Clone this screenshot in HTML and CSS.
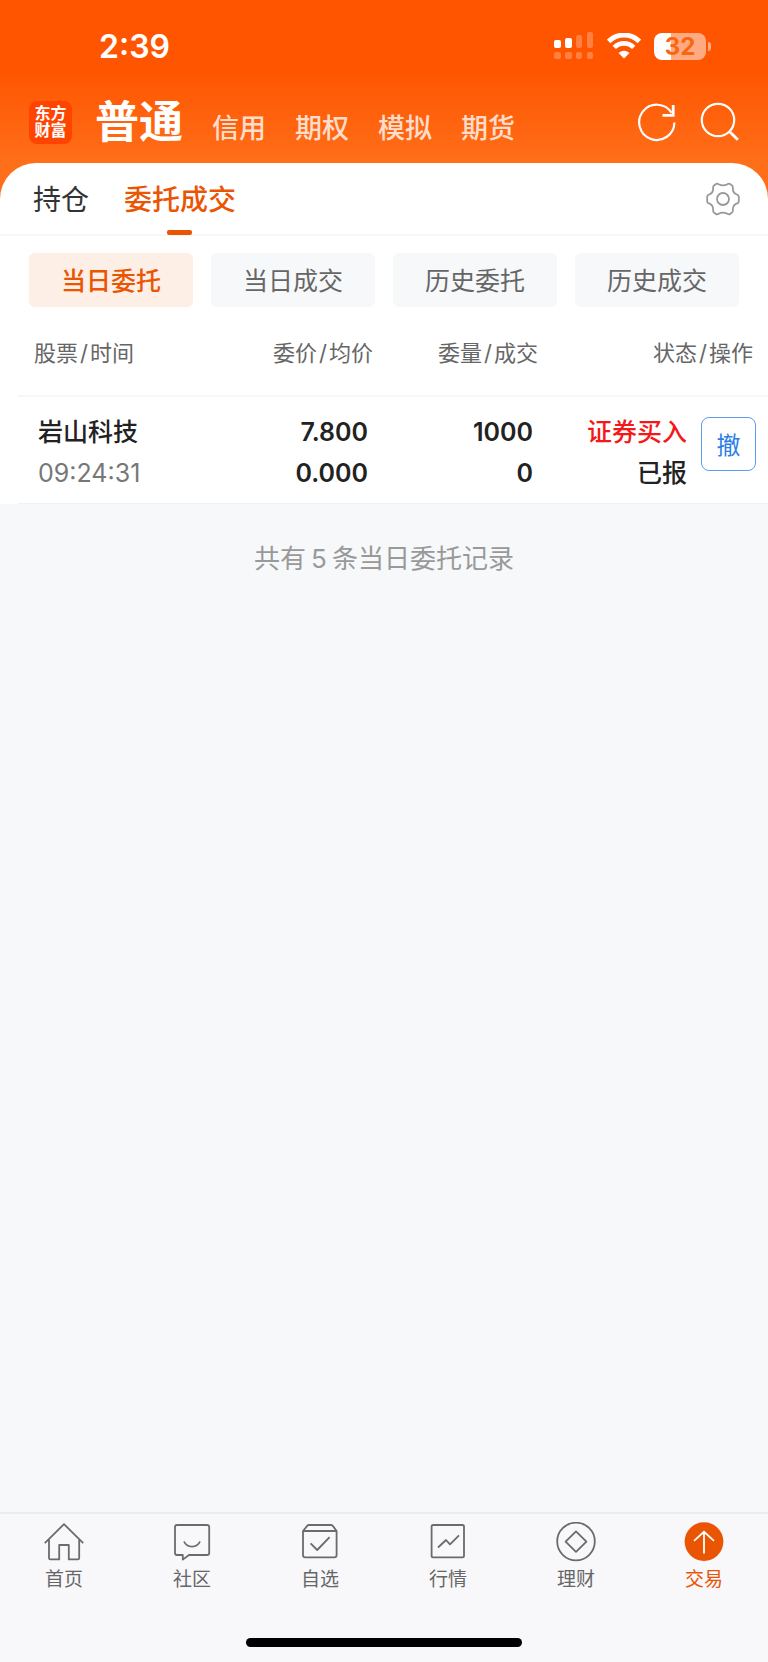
FILE: index.html
```html
<!DOCTYPE html>
<html lang="zh-CN">
<head>
  <meta charset="UTF-8" />
  <meta name="viewport" content="width=device-width, initial-scale=1.0" />
  <title>委托成交</title>
  <link rel="stylesheet" href="styles.css">
</head>
<body>

  <header class="top">
    <div class="status-bar">
      <span class="clock">2:39</span>
      <div class="status-icons">
        <svg class="signal" width="40" height="28" viewBox="0 0 40 28" fill="#fff">
          <rect x="0" y="8" width="7" height="8" rx="2"/>
          <rect x="11" y="6" width="7" height="10" rx="2"/>
          <g opacity="0.25">
            <rect x="22" y="3" width="6" height="13" rx="2"/>
            <rect x="33" y="0" width="6" height="16" rx="2"/>
            <rect x="0" y="20" width="7" height="7" rx="2"/>
            <rect x="11" y="20" width="7" height="7" rx="2"/>
            <rect x="22" y="20" width="6" height="7" rx="2"/>
            <rect x="33" y="20" width="6" height="7" rx="2"/>
          </g>
        </svg>
        <svg class="wifi" width="34" height="26" viewBox="0 0 34 26">
          <path d="M1.6 8.4 A21.8 21.8 0 0 1 32.4 8.4" fill="none" stroke="#fff" stroke-width="5"/>
          <path d="M7.2 14.4 A13.8 13.8 0 0 1 26.8 14.4" fill="none" stroke="#fff" stroke-width="4.8"/>
          <path d="M17 25.5 L11.5 20 Q17 15.4 22.5 20 Z" fill="#fff"/>
        </svg>
        <div class="battery"><span class="battery-level">32</span></div>
      </div>
    </div>

    <div class="account-bar">
      <div class="logo"><span>东方</span><span>财富</span></div>
      <nav class="accounts">
        <a href="#" class="account active">普通</a>
        <a href="#" class="account">信用</a>
        <a href="#" class="account">期权</a>
        <a href="#" class="account">模拟</a>
        <a href="#" class="account">期货</a>
      </nav>
      <div class="tools">
        <button type="button" class="icon-btn" aria-label="刷新">
          <svg width="40" height="40" viewBox="0 0 40 40" fill="none" stroke="#fff" stroke-width="2.2">
            <path d="M37.4 20.5 A17.6 17.6 0 1 1 34.6 10.8"/>
            <path d="M36.2 3 V13.4 H25.5" stroke-width="2.8"/>
          </svg>
        </button>
        <button type="button" class="icon-btn" aria-label="搜索">
          <svg width="40" height="40" viewBox="0 0 40 40" fill="none" stroke="#fff" stroke-width="2.2">
            <circle cx="18" cy="18" r="16.2"/>
            <path d="M29.5 29.5 L37.8 37.8" stroke-width="2.8"/>
          </svg>
        </button>
      </div>
    </div>
  </header>

  <main class="panel">
    <div class="tabs">
      <a href="#" class="tab">持仓</a>
      <a href="#" class="tab active">委托成交</a>
      <button type="button" class="icon-btn settings" aria-label="设置">
        <svg width="34" height="34" viewBox="0 0 34 34" fill="none" stroke="#999" stroke-width="1.8" stroke-linejoin="round">
          <path d="M12.6 2.2 Q17 4.6 21.4 2.2 Q23 1 24.4 2.2 L26.2 3.6 Q27 4.4 26.8 6 Q26.8 11 30.6 12.4 Q32.8 13 32.8 14.6 V19.4 Q32.8 21 30.6 21.6 Q26.8 23 26.8 28 Q27 29.6 26.2 30.4 L24.4 31.8 Q23 33 21.4 31.8 Q17 29.4 12.6 31.8 Q11 33 9.6 31.8 L7.8 30.4 Q7 29.6 7.2 28 Q7.2 23 3.4 21.6 Q1.2 21 1.2 19.4 V14.6 Q1.2 13 3.4 12.4 Q7.2 11 7.2 6 Q7 4.4 7.8 3.6 L9.6 2.2 Q11 1 12.6 2.2 Z"/>
          <circle cx="17" cy="17" r="6"/>
        </svg>
      </button>
    </div>

    <div class="filters">
      <button type="button" class="filter active">当日委托</button>
      <button type="button" class="filter">当日成交</button>
      <button type="button" class="filter">历史委托</button>
      <button type="button" class="filter">历史成交</button>
    </div>

    <div class="orders-wrap">
      <table class="orders">
        <colgroup>
          <col class="col-stock">
          <col class="col-price">
          <col class="col-amount">
          <col class="col-state">
          <col class="col-action">
        </colgroup>
        <thead>
          <tr>
            <th>股票<i>/</i>时间</th>
            <th>委价<i>/</i>均价</th>
            <th>委量<i>/</i>成交</th>
            <th colspan="2">状态<i>/</i>操作</th>
          </tr>
        </thead>
        <tbody>
          <tr>
            <td><div>岩山科技</div><div class="time">09:24:31</div></td>
            <td><div>7.800</div><div>0.000</div></td>
            <td><div>1000</div><div>0</div></td>
            <td><div class="buy">证券买入</div><div>已报</div></td>
            <td><button type="button" class="cancel">撤</button></td>
          </tr>
        </tbody>
      </table>
    </div>
  </main>

  <p class="summary">共有<span>5</span>条当日委托记录</p>

  <footer class="bottom">
    <nav class="tabbar">
      <a href="#" class="tabbar-item">
        <svg width="40" height="40" viewBox="0 0 40 40" fill="none" stroke="#6b6b6b" stroke-width="1.8" stroke-linejoin="round">
          <path d="M.8 21.2 L20 2.2 L39.2 21.2"/>
          <path d="M5 17.5 V36 Q5 37.4 6.4 37.4 H15.2 V23 H24.8 V37.4 H33.8 Q35.2 37.4 35.2 36 V17.5"/>
        </svg>
        <span>首页</span>
      </a>
      <a href="#" class="tabbar-item">
        <svg width="40" height="40" viewBox="0 0 40 40" fill="none" stroke="#6b6b6b" stroke-width="1.8" stroke-linejoin="round">
          <path d="M5 3 H35 Q37.2 3 37.2 5 V31 Q37.2 33 35 33 H17 L10.8 37.6 V33 H5 Q3 33 3 31 V5 Q3 3 5 3 Z"/>
          <path d="M12 19.5 C15 26.2 25 26.2 28 19.5"/>
        </svg>
        <span>社区</span>
      </a>
      <a href="#" class="tabbar-item">
        <svg width="40" height="40" viewBox="0 0 40 40" fill="none" stroke="#6b6b6b" stroke-width="1.8" stroke-linejoin="round">
          <path d="M3 9 L7.4 3.6 Q8 3 8.8 3 H31 Q32 3 32.6 3.6 L36.6 9 V33 Q36.6 35.4 34.2 35.4 H5.4 Q3 35.4 3 33 Z"/>
          <path d="M3 9 H36.6"/>
          <path d="M10.6 21.3 L17.2 28 L29.6 15.2"/>
        </svg>
        <span>自选</span>
      </a>
      <a href="#" class="tabbar-item">
        <svg width="40" height="40" viewBox="0 0 40 40" fill="none" stroke="#6b6b6b" stroke-width="1.8" stroke-linejoin="round">
          <rect x="3.6" y="3" width="32.4" height="32.4" rx="1.6"/>
          <path d="M10 25.5 L18 18 L22 22.4 L31 13.4"/>
        </svg>
        <span>行情</span>
      </a>
      <a href="#" class="tabbar-item">
        <svg width="40" height="40" viewBox="0 0 40 40" fill="none" stroke="#6b6b6b" stroke-width="1.8" stroke-linejoin="round">
          <circle cx="20" cy="19.5" r="18.8"/>
          <path d="M20 9.4 L30.4 19.6 L20 29.8 L9.6 19.6 Z"/>
        </svg>
        <span>理财</span>
      </a>
      <a href="#" class="tabbar-item active">
        <svg width="40" height="40" viewBox="0 0 40 40" fill="none" stroke="#fff" stroke-width="1.8">
          <circle cx="20" cy="19.6" r="19.4" fill="#ea5504" stroke="none"/>
          <path d="M20 31.4 V10 M10 18.8 L20 9.8 L30 18.8"/>
        </svg>
        <span>交易</span>
      </a>
    </nav>
    <div class="home-indicator"></div>
  </footer>

</body>
</html>
```
FILE: styles.css
```css
* {
  box-sizing: border-box;
}

body {
  margin: 0;
  min-height: 100vh;
  display: flex;
  flex-direction: column;
  background: #f7f8fa;
  color: #222;
  font-family: Inter, "Noto Sans CJK SC", sans-serif;
}

a {
  color: inherit;
  text-decoration: none;
}

button {
  font-family: inherit;
  padding: 0;
  border: none;
  background: none;
  cursor: pointer;
}

svg {
  display: block;
}

/* header */
.top {
  height: 204px;
  background: linear-gradient(#ff5500 70px, #ff6f1a 165px);
  color: #fff;
}

.status-bar {
  display: flex;
  justify-content: space-between;
  align-items: center;
  height: 92px;
  padding: 0 58px 0 99px;
}

.clock {
  font-size: 32px;
  font-weight: 600;
}

.status-icons {
  display: flex;
  align-items: center;
  gap: 13px;
}

.battery {
  position: relative;
  width: 52px;
  height: 27px;
  margin-right: 4px;
  border-radius: 8px;
  background: linear-gradient(90deg, #fff 32%, #ffaa80 32%);
  color: #f96611;
  text-align: center;
}

.battery::after {
  content: "";
  position: absolute;
  right: -5px;
  top: 9px;
  width: 3px;
  height: 9px;
  border-radius: 0 3px 3px 0;
  background: #ffaa80;
}

.battery-level {
  font-size: 24px;
  font-weight: 700;
  line-height: 27px;
}

.account-bar {
  display: flex;
  align-items: center;
  height: 60px;
  padding: 0 28px 0 29px;
}

.logo {
  display: flex;
  flex-direction: column;
  justify-content: center;
  width: 43px;
  height: 43px;
  margin-right: 23px;
  border-radius: 8px;
  background: #ff4400;
  font-size: 16px;
  font-weight: 700;
  line-height: 17px;
  text-align: center;
}

.accounts {
  display: flex;
  align-items: baseline;
  gap: 29px;
  padding-top: 7px;
}

.account {
  font-size: 27px;
  font-weight: 500;
  line-height: 60px;
  color: rgba(255, 255, 255, 0.8);
}

.account.active {
  font-size: 44px;
  font-weight: 700;
  color: #fff;
}

.tools {
  display: flex;
  gap: 23px;
  margin-left: auto;
}

/* white panel over the header */
.panel {
  margin-top: -41px;
  border-radius: 36px 36px 0 0;
  background: #fff;
}

.tabs {
  display: flex;
  align-items: center;
  gap: 35px;
  height: 73px;
  padding: 0 28px 0 33px;
  border-bottom: 2px solid #f7f7f9;
}

.tab {
  position: relative;
  padding-top: 2px;
  font-size: 28px;
  line-height: 70px;
  color: #333;
}

.tab.active {
  font-weight: 500;
  color: #ea5504;
}

.tab.active::after {
  content: "";
  position: absolute;
  left: 50%;
  bottom: 0;
  width: 25px;
  height: 5px;
  margin-left: -13px;
  border-radius: 2px;
  background: #ea5504;
}

.settings {
  margin-left: auto;
}

.filters {
  display: grid;
  grid-template-columns: repeat(4, 1fr);
  gap: 18px;
  padding: 17px 29px 0;
}

.filter {
  height: 54px;
  padding-bottom: 2px;
  border-radius: 6px;
  background: #f7f8fa;
  font-size: 25px;
  color: #666;
}

.filter.active {
  background: #fdeee6;
  font-weight: 500;
  color: #ea5504;
}

.orders-wrap {
  padding-left: 18px;
}

.orders {
  width: 100%;
  table-layout: fixed;
  border-collapse: collapse;
}

.col-price,
.col-amount {
  width: 165px;
}

.col-state {
  width: 149px;
}

.col-action {
  width: 81px;
}

.orders th {
  height: 89px;
  padding: 0;
  border-bottom: 2px solid #f7f7f9;
  font-size: 22px;
  font-weight: 400;
  color: #666;
  text-align: right;
}

.orders th:first-child {
  padding-left: 16px;
  text-align: left;
}

.orders th:last-child {
  padding-right: 15px;
}

.orders th i {
  margin: 0 2px;
  font-style: normal;
}

.orders td {
  padding: 15px 5px 9px 0;
  border-bottom: 1px solid #f0f1f3;
  font-size: 25px;
  font-weight: 600;
  line-height: 41px;
  text-align: right;
  vertical-align: top;
  white-space: nowrap;
}

.orders td:first-child {
  padding-left: 20px;
  font-weight: 500;
  text-align: left;
}

.orders td:nth-child(4) {
  padding-right: 0;
  font-weight: 500;
}

.orders td:last-child {
  padding: 20px 12px 0 0;
}

.orders .time {
  font-weight: 400;
  color: #777;
}

.buy {
  color: #f51818;
}

.cancel {
  width: 55px;
  height: 54px;
  padding-bottom: 2px;
  border: 1px solid #5b9cf0;
  border-radius: 8px;
  font-size: 24px;
  color: #2b7de9;
  vertical-align: top;
}

.summary {
  flex: 1;
  margin: 0;
  padding-top: 35px;
  font-size: 26px;
  line-height: 40px;
  text-align: center;
  color: #999;
}

.summary span {
  margin: 0 5px;
}

/* bottom navigation */
.bottom {
  padding-bottom: 15px;
  border-top: 2px solid #ececee;
  background: #f8f8fb;
}

.tabbar {
  display: grid;
  grid-template-columns: repeat(6, 1fr);
  height: 124px;
  padding-top: 8px;
}

.tabbar-item {
  display: flex;
  flex-direction: column;
  align-items: center;
  font-size: 19px;
  line-height: 36px;
  color: #666;
}

.tabbar-item.active {
  color: #ea5504;
}

.home-indicator {
  width: 36%;
  height: 9px;
  margin: 0 auto;
  border-radius: 5px;
  background: #000;
}
```
